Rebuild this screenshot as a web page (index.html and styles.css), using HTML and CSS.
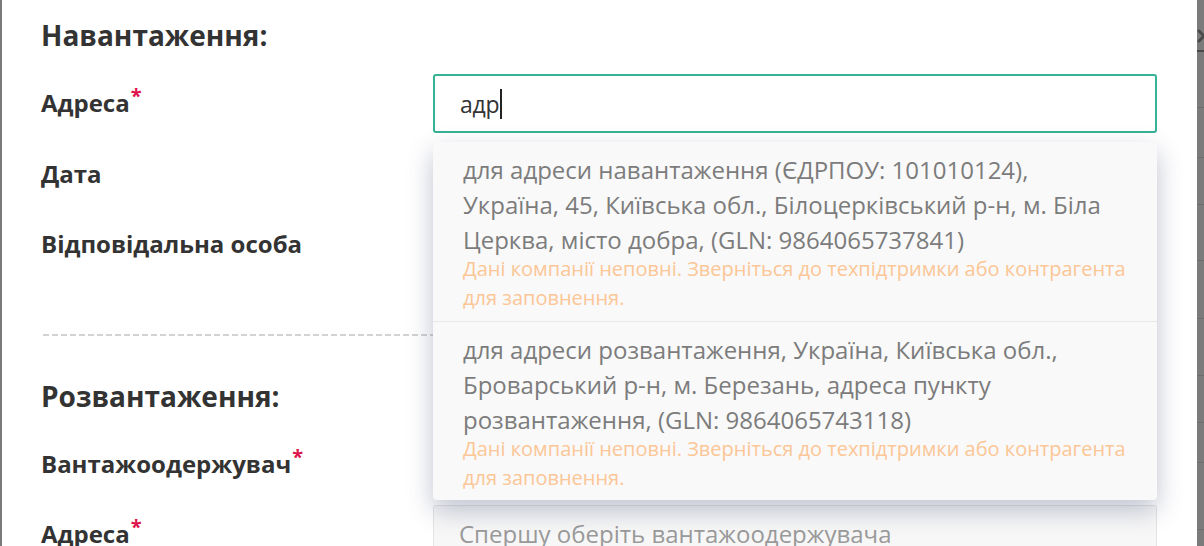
FILE: index.html
```html
<!DOCTYPE html>
<html lang="uk">
<head>
<meta charset="utf-8">
<title>Навантаження</title>
<link rel="stylesheet" href="styles.css">
</head>
<body>
<div class="modal">
  <section class="block block-first">
    <h2 class="block-title">Навантаження:</h2>
    <div class="rows">
      <div class="row">
        <div class="label">Адреса<span class="req">*</span></div>
        <div class="field">
          <div class="input input-active"><span class="input-text">адр</span><span class="caret"></span></div>
          <div class="dropdown">
            <div class="option">
              <div class="opt-main">для адреси навантаження (ЄДРПОУ: 101010124), Україна, 45, Київська обл., Білоцерківський р-н, м. Біла Церква, місто добра, (GLN: 9864065737841)</div>
              <div class="opt-warn">Дані компанії неповні. Зверніться до техпідтримки або контрагента для заповнення.</div>
            </div>
            <div class="option">
              <div class="opt-main">для адреси розвантаження, Україна, Київська обл., Броварський р-н, м. Березань, адреса пункту розвантаження, (GLN: 9864065743118)</div>
              <div class="opt-warn">Дані компанії неповні. Зверніться до техпідтримки або контрагента для заповнення.</div>
            </div>
          </div>
        </div>
      </div>
      <div class="row">
        <div class="label">Дата</div>
        <div class="field"><div class="input"></div></div>
      </div>
      <div class="row">
        <div class="label">Відповідальна особа</div>
        <div class="field"><div class="input"></div></div>
      </div>
    </div>
  </section>
  <div class="divider"></div>
  <section class="block">
    <h2 class="block-title">Розвантаження:</h2>
    <div class="rows">
      <div class="row">
        <div class="label">Вантажоодержувач<span class="req">*</span></div>
        <div class="field"><div class="input"></div></div>
      </div>
      <div class="row">
        <div class="label">Адреса<span class="req">*</span></div>
        <div class="field"><div class="input input-disabled"><span class="placeholder">Спершу оберіть вантажоодержувача</span></div></div>
      </div>
    </div>
  </section>
</div>
<div class="backdrop-edge">
  <div class="edge-row edge-head">
    <svg class="edge-x" width="16" height="16" viewBox="0 0 16 16" aria-hidden="true"><path d="M3 3 L13 13 M13 3 L3 13" stroke="#4a4a4a" stroke-width="3" stroke-linecap="round"/></svg>
  </div>
  <div class="edge-row h56"></div>
  <div class="edge-row h50"></div>
  <div class="edge-row h47"></div>
  <div class="edge-row h56"></div>
  <div class="edge-row h58"></div>
  <div class="edge-row h57"></div>
  <div class="edge-row h47"></div>
  <div class="edge-row h40"></div>
  <div class="edge-row h67"></div>
</div>
</body>
</html>
```

FILE: styles.css
```css
* { box-sizing: border-box; }
html, body { margin: 0; padding: 0; }
body {
  width: 1204px;
  height: 546px;
  overflow: hidden;
  background: #7b7b7b;
  font-family: "Open Sans", "Noto Sans", sans-serif;
  color: #333;
  display: flex;
  align-items: flex-start;
}
.modal {
  margin-left: 2px;
  width: 1195px;
  height: 546px;
  background: #fff;
  padding: 16px 40px 0 39px;
  overflow: hidden;
}
.block-title {
  margin: 0 0 20px 0;
  font-size: 28px;
  line-height: 38px;
  font-weight: 700;
  color: #333;
}
.rows {
  display: flex;
  flex-direction: column;
  gap: 11px;
}
.row {
  display: flex;
  align-items: center;
  height: 59px;
}
.label {
  width: 392px;
  flex: none;
  font-size: 24px;
  line-height: 32px;
  font-weight: 700;
  color: #333;
}
.req {
  color: #e0144c;
  font-size: 20px;
  position: relative;
  top: -9px;
  margin-left: 1px;
}
.field {
  width: 724px;
  flex: none;
  position: relative;
  height: 59px;
}
.input {
  height: 59px;
  border: 1px solid #e3e3e3;
  border-radius: 3px;
  background: #fff;
  display: flex;
  align-items: center;
  padding-left: 25px;
  font-size: 23px;
  color: #333;
}
.input-active {
  border: 2px solid #36b294;
  padding-left: 25px;
}
.input-text { letter-spacing: -0.2px; }
.caret {
  display: inline-block;
  width: 2px;
  height: 30px;
  background: #222;
  margin-left: 1px;
}
.input-disabled {
  background: #f7f7f7;
  border-color: #e4e4e4;
  align-items: flex-start;
  padding-top: 12px;
}
.placeholder {
  color: #9a9a9a;
  font-size: 24px;
  line-height: 32px;
}
.dropdown {
  position: absolute;
  top: 68px;
  left: 0;
  width: 724px;
  background: #f9f9f9;
  border-radius: 4px;
  box-shadow: 0 10px 26px rgba(60, 68, 110, 0.32);
  z-index: 5;
}
.option {
  padding: 10px 30px 6px 30px;
  height: 179px;
}
.option + .option {
  border-top: 1px solid #e8e8e8;
}
.opt-main {
  font-size: 24px;
  line-height: 35px;
  color: #7c7c7c;
}
.opt-warn {
  margin-top: -3px;
  font-size: 20px;
  line-height: 29px;
  color: #fcc696;
}
.divider {
  margin: 61px 0 41px 2px;
  height: 2px;
  width: 1114px;
  background: repeating-linear-gradient(to right, #d2d2d2 0 6px, transparent 6px 9px);
}
.backdrop-edge {
  width: 7px;
  flex: none;
  display: flex;
  flex-direction: column;
}
.edge-row {
  border-bottom: 1px solid #6d6d6d;
}
.edge-head {
  height: 52px;
  border-bottom: 2px solid #4a4a4a;
  position: relative;
  overflow: hidden;
}
.edge-x {
  position: absolute;
  left: -1px;
  top: 28px;
}
.h56 { height: 56px; }
.h50 { height: 50px; }
.h47 { height: 47px; }
.h58 { height: 58px; }
.h57 { height: 57px; }
.h40 { height: 40px; }
.h67 { height: 67px; }
```
